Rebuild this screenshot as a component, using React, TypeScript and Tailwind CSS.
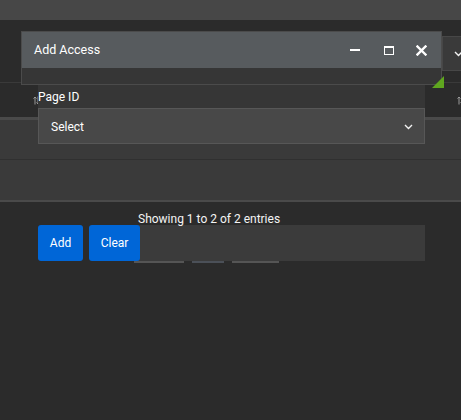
import React from "react";

function SortIcon() {
  return (
    <svg width="7" height="9" viewBox="0 0 7 9" fill="none" stroke="#9a9a9a" strokeWidth="1">
      <path d="M2 8.5V1M0.5 2.5L2 1L3.5 2.5" />
      <path d="M5 0.5V8M3.5 6.5L5 8L6.5 6.5" />
    </svg>
  );
}

function Chevron() {
  return (
    <svg width="9" height="6" viewBox="0 0 9 6" fill="none" stroke="#f2f2f2" strokeWidth="1.4">
      <path d="M1 1L4.5 4.5L8 1" />
    </svg>
  );
}

export default function App() {
  return (
    <div
      className="relative w-[461px] h-[420px] overflow-hidden bg-[#2b2b2b] text-white"
      style={{ fontFamily: "Roboto, 'Liberation Sans', sans-serif" }}
    >
      {/* top bar */}
      <div className="h-[20px] bg-[#474747]" />

      {/* toolbar area */}
      <div className="h-[62px] pl-[442px] pt-[16px]">
        <div className="h-[35px] w-[60px] bg-[#3a3a3a] border border-[#474747] flex items-center pl-[11px]">
          <Chevron />
        </div>
      </div>

      {/* table header */}
      <div className="h-[38px] border-t border-[#3a3a3a] border-b-[3px] border-b-[#4a4a4a] bg-[#2b2b2b] flex items-center justify-between pl-[33px] pr-0">
        <SortIcon />
        <div className="-mr-[3px]">
          <SortIcon />
        </div>
      </div>

      {/* table body */}
      <div className="bg-[#3a3a3a] border-b-2 border-[#4a4a4a]">
        <div className="h-[40px] border-b border-[#303030]" />
        <div className="h-[40px]" />
      </div>

      {/* footer */}
      <div className="pl-[138px] mt-[10px] text-[12px] leading-[14px] text-[#f4f4f4]">
        Showing 1 to 2 of 2 entries
      </div>
      <div className="-mt-px ml-[134px] w-[291px] h-[36px] bg-[#3b3b3b]" />
      <div className="ml-[134px] flex h-[2px]">
        <div className="w-[50px] bg-[#555555]" />
        <div className="ml-[8px] w-[32px] bg-[#4b5058]" />
        <div className="ml-[8px] w-[47px] bg-[#555555]" />
      </div>

      {/* dialog */}
      <div className="absolute left-[21px] top-[31px] w-[421px] h-[54px] border border-[#4b4b4b] bg-[#363636]">
        <div className="h-[36px] bg-[#575b5e] flex items-center pl-[12px] text-[12.5px] text-white">
          <span className="flex-1">Add Access</span>
          <div className="flex items-center">
            <div className="w-[10px] h-[2px] bg-white mr-[24px]" />
            <div className="w-[10px] h-[9px] border border-white border-t-2 mr-[22px]" />
            <svg width="11" height="11" viewBox="0 0 11 11" className="mr-[14px]" stroke="white" strokeWidth="2.4" strokeLinecap="square">
              <path d="M1.5 1.5L9.5 9.5M9.5 1.5L1.5 9.5" />
            </svg>
          </div>
        </div>
        <div className="h-[16px] px-[16px] overflow-visible">
          <div className="mt-[17px] bg-[#363636]">
            <div className="h-[23px] flex items-center text-[12px] text-white">Page ID</div>
            <div className="h-[36px] border border-[#575757] bg-[#484848] flex items-center justify-between pl-[12px] pr-[11px] pt-px text-[12px]">
              <span>Select</span>
              <Chevron />
            </div>
          </div>
          <div className="mt-[81px] flex gap-[6px]">
            <button className="w-[45px] h-[36px] rounded-[3px] bg-[#0066d7] text-white text-[12px]">Add</button>
            <button className="w-[51px] h-[36px] rounded-[3px] bg-[#0066d7] text-white text-[12px]">Clear</button>
          </div>
        </div>
      </div>

      {/* resize grip */}
      <div
        className="absolute left-[432px] top-[76px] w-[12px] h-[12px] bg-[#5fa61f]"
        style={{ clipPath: "polygon(100% 0, 100% 100%, 0 100%)" }}
      />
    </div>
  );
}
